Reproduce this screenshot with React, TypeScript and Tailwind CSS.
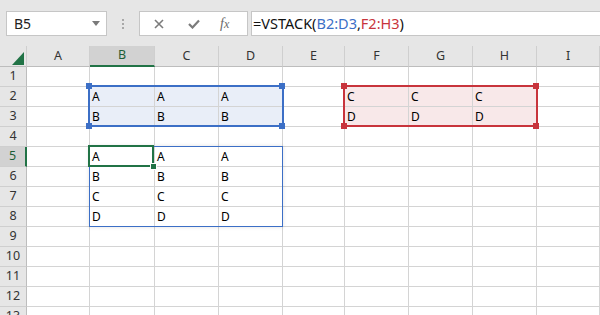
import React from 'react';

const colW = ['w-[27px]', 'w-[63px]', 'w-[65px]', 'w-[64px]', 'w-[64px]', 'w-[62px]', 'w-[64px]', 'w-[64px]', 'w-[64px]', 'w-[63px]'];
const letters = ['', 'A', 'B', 'C', 'D', 'E', 'F', 'G', 'H', 'I'];

const data: Record<string, string> = {
  B2: 'A', C2: 'A', D2: 'A', B3: 'B', C3: 'B', D3: 'B',
  F2: 'C', G2: 'C', H2: 'C', F3: 'D', G3: 'D', H3: 'D',
  B5: 'A', C5: 'A', D5: 'A', B6: 'B', C6: 'B', D6: 'B',
  B7: 'C', C7: 'C', D7: 'C', B8: 'D', C8: 'D', D8: 'D',
};

const cellBg = (col: number, row: number) => {
  if (row >= 2 && row <= 3 && col >= 2 && col <= 4) return 'bg-[#e9eef8]';
  if (row >= 2 && row <= 3 && col >= 6 && col <= 8) return 'bg-[#f8e8e9]';
  return 'bg-white';
};

const Handle = ({ className }: { className: string }) => (
  <div className={`absolute w-[6px] h-[6px] ${className}`} />
);

export default function App() {
  const rows = Array.from({ length: 13 }, (_, i) => i + 1);

  return (
    <div className="w-[600px] h-[315px] overflow-hidden bg-white font-['Noto_Sans',sans-serif]">
      {/* formula bar */}
      <div className="h-[46px] bg-[#e6e6e6] flex items-start pt-[11px]">
        <div className="ml-[6px] w-[101px] h-[25px] bg-white border border-[#c6c6c6] flex items-center justify-between pl-[7px] pr-[6px]">
          <span className="text-[14px] text-[#222]">B5</span>
          <svg width="8" height="5" viewBox="0 0 8 5"><path d="M0 0h8L4 5z" fill="#7a7a7a" /></svg>
        </div>
        <div className="w-[32px] h-[25px] flex flex-col items-center justify-center gap-[2px]">
          <div className="w-[2px] h-[2px] bg-[#a8a8a8]" />
          <div className="w-[2px] h-[2px] bg-[#a8a8a8]" />
          <div className="w-[2px] h-[2px] bg-[#a8a8a8]" />
        </div>
        <div className="w-[109px] h-[25px] bg-white border border-[#c6c6c6] flex items-center">
          <svg className="ml-[14px]" width="10" height="10" viewBox="0 0 10 10">
            <path d="M1 1l8 8M9 1l-8 8" stroke="#7b7b7b" strokeWidth="1.6" />
          </svg>
          <svg className="ml-[24px]" width="12" height="10" viewBox="0 0 12 10">
            <path d="M1 5l3.5 3.5L11 1.5" stroke="#7b7b7b" strokeWidth="2.2" fill="none" />
          </svg>
          <span className="ml-[20px] text-[14px] italic text-[#6a6a6a] font-['Liberation_Serif',serif]">
            f<span className="text-[12px]">x</span>
          </span>
        </div>
        <div className="ml-[3px] flex-1 h-[25px] bg-white border border-[#c6c6c6] border-r-0 flex items-center pl-[1px] text-[14.5px] text-[#111]">
          <span>=VSTACK(</span>
          <span className="text-[#3c6fc6]">B2:D3</span>
          <span>,</span>
          <span className="text-[#c8343c]">F2:H3</span>
          <span>)</span>
        </div>
      </div>

      {/* grid */}
      <div className="relative">
        <div className="flex h-[21px] bg-[#e6e6e6]">
          {letters.map((l, i) => (
            <div
              key={i}
              className={`${colW[i]} shrink-0 flex items-center justify-center text-[12.5px] border-r border-[#cfcfcf] ${
                i === 2 ? 'bg-[#d2d2d2] border-b-2 border-b-[#217346] text-[#1d5e37]' : 'border-b border-b-[#bdbdbd] text-[#333]'
              }`}
            >
              {i === 0 ? (
                <svg className="ml-[9px] mt-[4px]" width="12" height="13" viewBox="0 0 12 13"><path d="M12 0v13H0z" fill="#217346" /></svg>
              ) : (
                l
              )}
            </div>
          ))}
        </div>
        {rows.map(r => (
          <div key={r} className="flex h-[20px]">
            {letters.map((l, i) =>
              i === 0 ? (
                <div
                  key={i}
                  className={`${colW[i]} shrink-0 flex items-center justify-center text-[12.5px] border-b border-[#cfcfcf] ${
                    r === 5 ? 'bg-[#d2d2d2] border-r-2 border-r-[#217346] text-[#1d5e37]' : 'bg-[#e6e6e6] border-r border-r-[#bdbdbd] text-[#333]'
                  }`}
                >
                  {r}
                </div>
              ) : (
                <div
                  key={i}
                  className={`${colW[i]} ${cellBg(i, r)} shrink-0 border-r border-b border-[#d4d4d4] flex items-end pl-[2px] pb-[1px] text-[12px] leading-[16px] text-black`}
                >
                  {data[`${l}${r}`] ?? ''}
                </div>
              )
            )}
          </div>
        ))}

        {/* B2:D3 reference */}
        <div className="absolute left-[88px] top-[39px] w-[196px] h-[42px] border-2 border-[#3c6fc6]" />
        <Handle className="left-[86px] top-[37px] bg-[#3c6fc6]" />
        <Handle className="left-[279px] top-[37px] bg-[#3c6fc6]" />
        <Handle className="left-[86px] top-[77px] bg-[#3c6fc6]" />
        <Handle className="left-[279px] top-[77px] bg-[#3c6fc6]" />

        {/* F2:H3 reference */}
        <div className="absolute left-[343px] top-[39px] w-[195px] h-[42px] border-2 border-[#c8343c]" />
        <Handle className="left-[341px] top-[37px] bg-[#c8343c]" />
        <Handle className="left-[533px] top-[37px] bg-[#c8343c]" />
        <Handle className="left-[341px] top-[77px] bg-[#c8343c]" />
        <Handle className="left-[533px] top-[77px] bg-[#c8343c]" />

        {/* spill range */}
        <div className="absolute left-[89px] top-[100px] w-[194px] h-[81px] border border-[#3c6fc6] shadow-[0_0_4px_rgba(0,0,0,0.12)]" />

        {/* active cell */}
        <div className="absolute left-[88px] top-[99px] w-[66px] h-[22px] border-2 border-[#217346]" />
        <div className="absolute left-[150px] top-[117px] w-[7px] h-[7px] bg-[#217346] border border-white" />
      </div>
    </div>
  );
}
